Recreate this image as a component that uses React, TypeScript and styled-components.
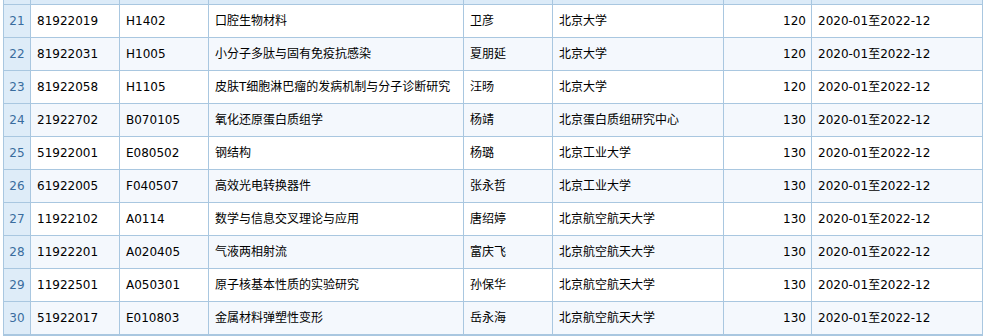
import styled, { createGlobalStyle } from 'styled-components';

const GlobalStyle = createGlobalStyle`
  html, body {
    margin: 0;
    padding: 0;
    background: #ffffff;
  }
  body {
    font-family: "DejaVu Sans", "Noto Sans CJK SC", sans-serif;
    font-size: 12px;
    color: #000;
  }
`;

type Project = {
  no: number;
  code: string;
  subject: string;
  title: string;
  leader: string;
  org: string;
  amount: number;
  period: string;
};

const rows: Project[] = [
  { no: 21, code: '81922019', subject: 'H1402', title: '口腔生物材料', leader: '卫彦', org: '北京大学', amount: 120, period: '2020-01至2022-12' },
  { no: 22, code: '81922031', subject: 'H1005', title: '小分子多肽与固有免疫抗感染', leader: '夏朋延', org: '北京大学', amount: 120, period: '2020-01至2022-12' },
  { no: 23, code: '81922058', subject: 'H1105', title: '皮肤T细胞淋巴瘤的发病机制与分子诊断研究', leader: '汪旸', org: '北京大学', amount: 120, period: '2020-01至2022-12' },
  { no: 24, code: '21922702', subject: 'B070105', title: '氧化还原蛋白质组学', leader: '杨靖', org: '北京蛋白质组研究中心', amount: 130, period: '2020-01至2022-12' },
  { no: 25, code: '51922001', subject: 'E080502', title: '钢结构', leader: '杨璐', org: '北京工业大学', amount: 130, period: '2020-01至2022-12' },
  { no: 26, code: '61922005', subject: 'F040507', title: '高效光电转换器件', leader: '张永哲', org: '北京工业大学', amount: 130, period: '2020-01至2022-12' },
  { no: 27, code: '11922102', subject: 'A0114', title: '数学与信息交叉理论与应用', leader: '唐绍婷', org: '北京航空航天大学', amount: 130, period: '2020-01至2022-12' },
  { no: 28, code: '11922201', subject: 'A020405', title: '气液两相射流', leader: '富庆飞', org: '北京航空航天大学', amount: 130, period: '2020-01至2022-12' },
  { no: 29, code: '11922501', subject: 'A050301', title: '原子核基本性质的实验研究', leader: '孙保华', org: '北京航空航天大学', amount: 130, period: '2020-01至2022-12' },
  { no: 30, code: '51922017', subject: 'E010803', title: '金属材料弹塑性变形', leader: '岳永海', org: '北京航空航天大学', amount: 130, period: '2020-01至2022-12' },
];

const COLS = '27px 89px 89px 255px 89px 171px 88px 171px';
const LINE = '#a9c7e0';

const Page = styled.div`
  padding-left: 3px;
  width: 980px;
`;

const Grid = styled.div`
  border-left: 1px solid ${LINE};
  border-bottom: 1px solid ${LINE};
  width: 979px;
`;

const Row = styled.div<{ $alt?: boolean; $peek?: boolean }>`
  display: grid;
  grid-template-columns: ${COLS};
  height: ${(p) => (p.$peek ? '5px' : '33px')};
  background: ${(p) => (p.$peek ? '#dcebf8' : p.$alt ? '#f4f8fd' : '#ffffff')};
  overflow: hidden;
`;

const Cell = styled.div<{ $align?: 'left' | 'center' | 'right' }>`
  display: flex;
  align-items: center;
  justify-content: ${(p) =>
    p.$align === 'center' ? 'center' : p.$align === 'right' ? 'flex-end' : 'flex-start'};
  padding: 0 5px 0 6px;
  border-right: 1px solid ${LINE};
  border-bottom: 1px solid ${LINE};
  white-space: nowrap;
  overflow: hidden;
  line-height: 1;
`;

const NumCell = styled(Cell)`
  background: #deecf8;
  color: #3a6c9e;
  padding: 0;
`;

const PeekCell = styled.div<{ $num?: boolean }>`
  background: ${(p) => (p.$num ? '#dcebf8' : 'transparent')};
  border-right: 1px solid ${LINE};
  border-bottom: 1px solid ${LINE};
`;

export default function App() {
  return (
    <>
      <GlobalStyle />
      <Page>
        <Grid>
          <Row $peek>
            <PeekCell $num />
            {Array.from({ length: 7 }).map((_, i) => (
              <PeekCell key={i} />
            ))}
          </Row>
          {rows.map((r, i) => (
            <Row key={r.no} $alt={i % 2 === 1}>
              <NumCell $align="center">{r.no}</NumCell>
              <Cell>{r.code}</Cell>
              <Cell>{r.subject}</Cell>
              <Cell>{r.title}</Cell>
              <Cell>{r.leader}</Cell>
              <Cell>{r.org}</Cell>
              <Cell $align="right">{r.amount}</Cell>
              <Cell>{r.period}</Cell>
            </Row>
          ))}
        </Grid>
      </Page>
    </>
  );
}
